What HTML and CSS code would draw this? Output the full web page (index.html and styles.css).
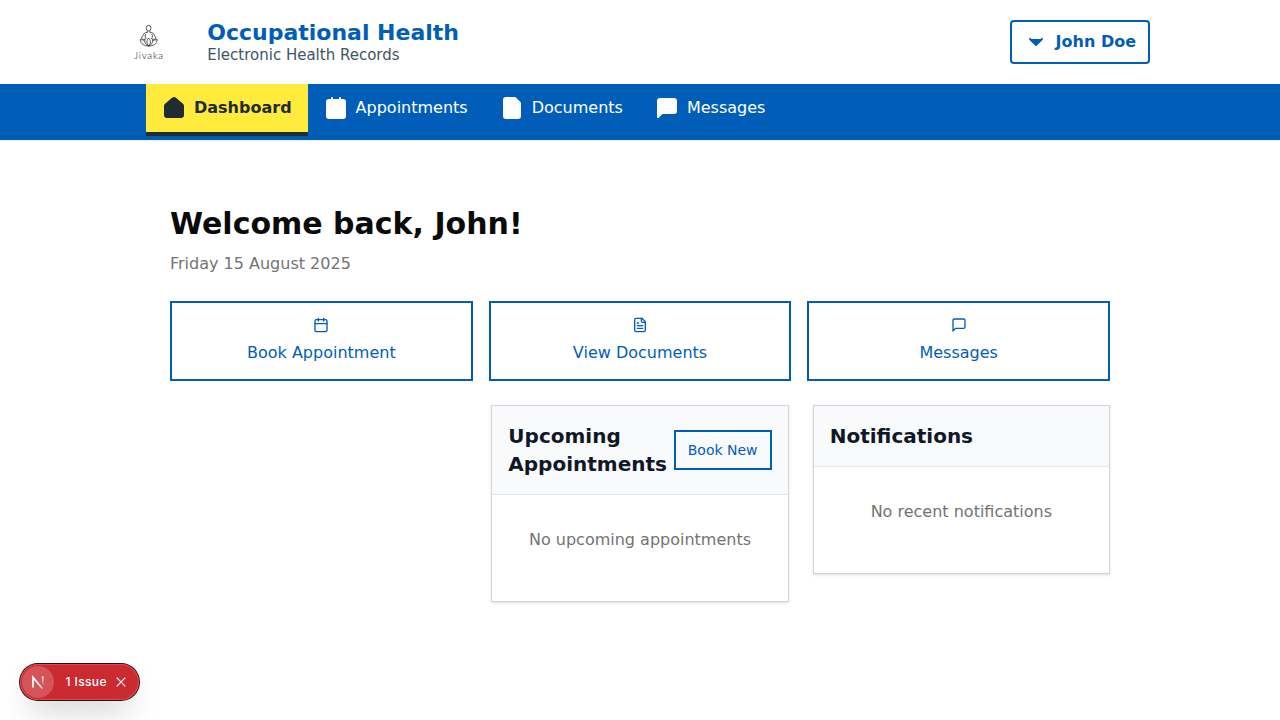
FILE: index.html
```html
<!DOCTYPE html>
<html lang="en">
<head>
<meta charset="utf-8">
<title>Occupational Health</title>
<link rel="stylesheet" href="styles.css">
</head>
<body>
<svg class="sprite" aria-hidden="true">
  <symbol id="home" viewBox="0 0 24 24"><path d="M3 10a2 2 0 0 1 .709-1.528l7-5.999a2 2 0 0 1 2.582 0l7 5.999A2 2 0 0 1 21 10v9a2 2 0 0 1-2 2H5a2 2 0 0 1-2-2z"/></symbol>
  <symbol id="calendar" viewBox="0 0 24 24"><path d="M8 2v4M16 2v4"/><rect width="18" height="18" x="3" y="4" rx="2"/><path d="M3 10h18"/></symbol>
  <symbol id="file" viewBox="0 0 24 24"><path d="M15 2H6a2 2 0 0 0-2 2v16a2 2 0 0 0 2 2h12a2 2 0 0 0 2-2V7Z"/><path d="M14 2v4a2 2 0 0 0 2 2h4M10 9H8M16 13H8M16 17H8"/></symbol>
  <symbol id="message" viewBox="0 0 24 24"><path d="M21 15a2 2 0 0 1-2 2H7l-4 4V5a2 2 0 0 1 2-2h14a2 2 0 0 1 2 2z"/></symbol>
  <symbol id="chevron" viewBox="0 0 24 24"><path d="m6 9 6 6 6-6"/></symbol>
</svg>
<header class="header">
  <div class="brand">
    <div class="logo">
      <svg class="logo-figure" viewBox="0 0 20 24">
        <rect x="7.400" y="1.300" width="4.400" height="5.800" rx="2.200"/>
        <path d="M8.500 7.200v1.200C5.500 8.600 4.300 9.600 4 11.600l-1.800 2.500c.8 1.500 3.400 1.700 5 .4M11 7.200v1.200c3 .2 4.200 1.200 4.500 3.200l1.700 2.500c-.8 1.500-3.200 1.700-4.800.4"/>
        <path d="M7.200 14.500C5.800 12.800 5.700 11.300 7 10.100M12.400 14.500c1.400-1.700 1.500-3.200.2-4.400"/>
        <path d="M9.700 14.100c-2.300 2.200-2.300 5.200 0 7.900 2.300-2.700 2.300-5.700 0-7.900ZM5.800 15.300c-.4 3 .8 5.300 3.900 6.700M13.600 15.300c.4 3-.8 5.300-3.900 6.700M1.100 15.600c.6 4.600 4 6.400 8.600 6.400s8-1.800 8.600-6.400c-2 0-3.200.5-4.600 1.700M1.100 15.600c2 0 3.200.5 4.600 1.700"/>
      </svg>
      <span class="logo-name">Jivaka</span>
    </div>
    <div class="titles">
      <div class="title">Occupational Health</div>
      <div class="subtitle">Electronic Health Records</div>
    </div>
  </div>
  <button class="user"><svg class="icon filled"><use href="#chevron"/></svg>John Doe</button>
</header>
<nav class="nav">
  <a class="nav-item active"><svg class="icon filled"><use href="#home"/></svg>Dashboard</a>
  <a class="nav-item"><svg class="icon filled"><use href="#calendar"/></svg>Appointments</a>
  <a class="nav-item"><svg class="icon filled"><use href="#file"/></svg>Documents</a>
  <a class="nav-item"><svg class="icon filled"><use href="#message"/></svg>Messages</a>
</nav>
<main class="main">
  <h1 class="welcome">Welcome back, John!</h1>
  <p class="date">Friday 15 August 2025</p>
  <div class="actions">
    <button class="action"><svg class="icon small"><use href="#calendar"/></svg>Book Appointment</button>
    <button class="action"><svg class="icon small"><use href="#file"/></svg>View Documents</button>
    <button class="action"><svg class="icon small"><use href="#message"/></svg>Messages</button>
  </div>
  <div class="cards">
    <section class="card upcoming">
      <div class="card-head"><h2 class="card-title">Upcoming Appointments</h2><button class="book">Book New</button></div>
      <p class="empty">No upcoming appointments</p>
    </section>
    <section class="card">
      <div class="card-head"><h2 class="card-title">Notifications</h2></div>
      <p class="empty">No recent notifications</p>
    </section>
  </div>
</main>
<div class="issue">
  <span class="issue-mark">
    <svg class="n-mark" viewBox="0 0 14 14">
      <defs>
        <linearGradient id="fade" x1="0" y1="0" x2="0" y2="1"><stop offset="0" stop-color="#fff"/><stop offset="1" stop-color="#fff" stop-opacity="0"/></linearGradient>
        <linearGradient id="stem" gradientUnits="userSpaceOnUse" x1="8" y1="9" x2="12" y2="14"><stop offset="0" stop-color="#fff"/><stop offset="1" stop-color="#fff" stop-opacity="0.3"/></linearGradient>
      </defs>
      <path d="M2 12.500V2.400L11.600 13.800" fill="none" stroke="url(#stem)" stroke-width="1.700"/>
      <rect x="10.900" y="1.300" width="1.600" height="9.500" fill="url(#fade)"/>
    </svg>
  </span>
  <span class="issue-text">1 Issue</span>
  <svg class="close" viewBox="0 0 10 10"><path d="m.7.7 8.600 8.600M9.300.7.7 9.300"/></svg>
</div>
</body>
</html>
```
FILE: styles.css
```css
* { box-sizing: border-box; }
body { margin: 0; height: 720px; overflow: hidden; background: #fff; font: 16px/24px "DejaVu Sans", sans-serif; }
h1, h2, p { margin: 0; }
button { font: inherit; background: transparent; color: #005eb8; padding: 0; }
.sprite { position: absolute; width: 0; height: 0; }
.icon { width: 24px; height: 24px; flex: none; fill: none; stroke: currentColor; stroke-width: 2; stroke-linecap: round; stroke-linejoin: round; }
.filled { fill: currentColor; }
.small { width: 16px; height: 16px; }
.header { height: 84px; padding: 0 130px; display: flex; align-items: center; justify-content: space-between; }
.brand { display: flex; align-items: center; }
.logo { width: 37px; margin-right: 40.2px; display: flex; flex-direction: column; align-items: center; }
.logo-figure { width: 20px; height: 24px; fill: none; stroke: #222; stroke-width: .75; }
.logo-name { font: 300 10px/12px Lato, sans-serif; letter-spacing: .7px; color: #222; margin: 1px 0 0 1px; }
.titles { padding-top: 2px; }
.title { font-size: 22px; font-weight: 700; line-height: 24px; color: #005eb8; }
.subtitle { font-size: 15px; line-height: 20px; color: #425563; }
.user { width: 140px; height: 44px; padding: 0 12px; border: 2px solid #005eb8; border-radius: 4px; display: flex; align-items: center; gap: 7.6px; font-weight: 700; white-space: nowrap; }
.nav { height: 57px; padding: 0 146px; display: flex; align-items: flex-start; background: #005eb8; border-bottom: 1px solid #e8edee; }
.nav-item { height: 52px; padding: 12px 16px; display: flex; align-items: flex-start; gap: 8px; color: #fff; border-bottom: 4px solid transparent; }
.active { background: #ffeb3b; color: #212b32; border-color: #212b32; font-weight: 700; }
.main { width: 940px; margin: 0 auto; padding-top: 65px; }
.welcome { font-size: 30px; line-height: 36px; color: #0a0a0a; }
.date { margin-top: 10px; color: #737373; }
.actions { margin-top: 25px; display: grid; grid-template-columns: repeat(3, 1fr); gap: 16px; }
.action { height: 80px; border: 2px solid #005eb8; display: flex; flex-direction: column; align-items: center; justify-content: center; gap: 8px; }
.cards { margin-top: 24px; display: grid; grid-template-columns: repeat(3, 1fr); gap: 24px; align-items: start; }
.card { border: 1px solid #d1d5db; box-shadow: 0 1px 3px rgba(0,0,0,.1), 0 1px 2px -1px rgba(0,0,0,.1); }
.upcoming { grid-column: 2; }
.card-head { padding: 16px; display: flex; align-items: center; justify-content: space-between; background: #f9fafb; border-bottom: 1px solid #e5e7eb; }
.card-title { font-size: 20px; line-height: 28px; color: #101828; }
.book { width: 98px; height: 40px; flex: none; border: 2px solid #005eb8; font-size: 14px; }
.empty { height: 106px; padding-top: 33px; text-align: center; color: #737373; }
.issue { position: absolute; left: 20px; top: 664px; width: 119px; height: 36px; border-radius: 18px; padding-left: 2px; display: flex; align-items: center; background: #ca2a30; box-shadow: 0 0 0 1px #171717, inset 0 0 0 1px #e5484d, 0 16px 32px -8px rgba(0,0,0,.24); color: #fff; }
.issue-mark { width: 32px; height: 32px; border-radius: 50%; background: rgba(255,255,255,.2); display: flex; align-items: center; justify-content: center; }
.n-mark { width: 14px; height: 14px; }
.issue-text { margin-left: 11.5px; width: 41.5px; font: 500 12px/16px Inter, sans-serif; letter-spacing: .4px; white-space: nowrap; }
.close { margin-left: 9px; width: 10px; height: 10px; fill: none; stroke: #fff; stroke-width: 1.2; }
```
